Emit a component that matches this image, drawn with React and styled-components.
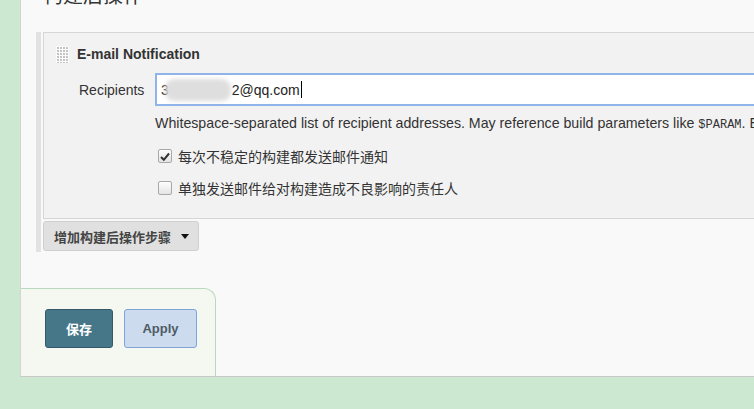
import styled, { createGlobalStyle } from "styled-components";

const GlobalStyle = createGlobalStyle`
  body {
    margin: 0;
    background: #cde8d0;
    font-family: "Liberation Sans", "Noto Sans CJK SC", sans-serif;
    color: #333;
    overflow: hidden;
  }
`;

const Page = styled.div`
  display: flex;
  height: 409px;
  padding-left: 20px;
`;

const Panel = styled.div`
  flex: 1;
  height: 377px;
  background: #f9f9f9;
  border-left: 1px solid #d4d4d4;
  border-bottom: 1px solid #c8c8c8;
  box-sizing: border-box;
  overflow: hidden;
  display: flex;
  flex-direction: column;
`;

const Heading = styled.h2`
  margin: -16px 0 0 22px;
  font-size: 20px;
  line-height: 24px;
  font-weight: normal;
  color: #333;
  white-space: nowrap;
`;

const Group = styled.div`
  margin: 24px 0 0 15px;
  border-left: 5px solid #e2e2e2;
  padding-left: 2px;
  padding-bottom: 1px;
`;

const Section = styled.div`
  background: #f2f2f2;
  border: 1px solid #d6d6d6;
  border-right: none;
  height: 187px;
  box-sizing: border-box;
  padding: 12px 0 0 12px;
`;

const SectionHeader = styled.div`
  display: flex;
  align-items: center;
  gap: 8px;
  height: 18px;
`;

const Title = styled.div`
  font-size: 14px;
  font-weight: bold;
  color: #333;
`;

const Field = styled.div`
  display: flex;
  align-items: center;
  margin-top: 10px;
`;

const Label = styled.div`
  width: 99px;
  padding-left: 23px;
  box-sizing: border-box;
  font-size: 14px;
  color: #333;
`;

const Input = styled.div`
  flex: 1;
  height: 33px;
  box-sizing: border-box;
  background: #fff;
  border: 2px solid #8fb4ea;
  border-right: none;
  display: flex;
  align-items: center;
  padding-left: 4px;
  font-size: 14px;
  color: #222;
  white-space: nowrap;
`;

const Blur = styled.span`
  display: inline-block;
  width: 66px;
  height: 22px;
  margin: 0 1px 0 -4px;
  background: #dedede;
  border-radius: 9px;
  filter: blur(2px);
`;

const Caret = styled.span`
  display: inline-block;
  width: 1px;
  height: 17px;
  margin-left: 1px;
  background: #000;
`;

const Body = styled.div`
  padding-left: 99px;
`;

const Help = styled.div`
  margin-top: 9px;
  font-size: 14.2px;
  color: #333;
  white-space: nowrap;
`;

const Code = styled.code`
  font-family: "Liberation Mono", monospace;
  font-size: 12px;
`;

const CheckRow = styled.label`
  display: flex;
  align-items: center;
  gap: 6px;
  font-size: 14px;
  color: #333;
  font-family: "Noto Sans CJK SC", sans-serif;
  margin-top: ${(p) => p.$gap}px;
  height: 20px;
`;

const Box = styled.span`
  width: 12px;
  height: 12px;
  margin-left: 3px;
  border: 1px solid #a8a8a8;
  border-radius: 2px;
  background: linear-gradient(#fdfdfd, #e4e4e4);
  display: flex;
  align-items: center;
  justify-content: center;
`;

const AddButton = styled.button`
  margin-top: 2px;
  height: 30px;
  padding: 0 9px 0 10px;
  display: flex;
  align-items: center;
  gap: 10px;
  background: #e0e0e0;
  border: 1px solid #cfcfcf;
  border-radius: 3px;
  font-family: "Noto Sans CJK SC", sans-serif;
  font-size: 13px;
  font-weight: bold;
  color: #444;
`;

const Footer = styled.div`
  margin-top: auto;
  width: 195px;
  height: 88px;
  box-sizing: border-box;
  background: #f5f8f0;
  border-top: 1px solid #b7d9bf;
  border-right: 1px solid #b7d9bf;
  border-top-right-radius: 12px;
  display: flex;
  align-items: flex-start;
  gap: 11px;
  padding: 20px 0 0 24px;
`;

const Button = styled.button`
  height: 39px;
  width: ${(p) => p.$width}px;
  border-radius: 3px;
  font-family: "Liberation Sans", "Noto Sans CJK SC", sans-serif;
  font-size: 13px;
  font-weight: bold;
  background: ${(p) => (p.$primary ? "#467789" : "#ccdcee")};
  border: 1px solid ${(p) => (p.$primary ? "#36596a" : "#7ea4d8")};
  color: ${(p) => (p.$primary ? "#fff" : "#4f5a66")};
`;

const Handle = () => (
  <svg width="13" height="17" viewBox="0 0 13 17">
    <rect width="13" height="17" fill="#fbfbfb" />
    {[0, 1, 2, 3].map((c) =>
      [0, 1, 2, 3, 4, 5].map((r) => (
        <rect key={`${c}-${r}`} x={1 + c * 3} y={1 + r * 3} width="2" height="2" fill="#c4c4c4" />
      ))
    )}
  </svg>
);

const Check = () => (
  <svg width="10" height="9" viewBox="0 0 10 9">
    <path d="M1 5 L3.8 7.8 L9 1.5" fill="none" stroke="#333" strokeWidth="2" />
  </svg>
);

export default function App() {
  return (
    <>
      <GlobalStyle />
      <Page>
        <Panel>
          <Heading>构建后操作</Heading>
          <Group>
            <Section>
              <SectionHeader>
                <Handle />
                <Title>E-mail Notification</Title>
              </SectionHeader>
              <Field>
                <Label>Recipients</Label>
                <Input>
                  3<Blur />2@qq.com<Caret />
                </Input>
              </Field>
              <Body>
                <Help>
                  Whitespace-separated list of recipient addresses. May reference build parameters like{" "}
                  <Code>$PARAM</Code>. E.g. <Code>$ADMINS</Code>
                </Help>
                <CheckRow $gap={14}>
                  <Box>
                    <Check />
                  </Box>
                  每次不稳定的构建都发送邮件通知
                </CheckRow>
                <CheckRow $gap={12}>
                  <Box />
                  单独发送邮件给对构建造成不良影响的责任人
                </CheckRow>
              </Body>
            </Section>
            <AddButton>
              增加构建后操作步骤
              <svg width="8" height="5" viewBox="0 0 8 5">
                <path d="M0 0 H8 L4 5 Z" fill="#111" />
              </svg>
            </AddButton>
          </Group>
          <Footer>
            <Button $primary $width={68}>保存</Button>
            <Button $width={73}>Apply</Button>
          </Footer>
        </Panel>
      </Page>
    </>
  );
}
